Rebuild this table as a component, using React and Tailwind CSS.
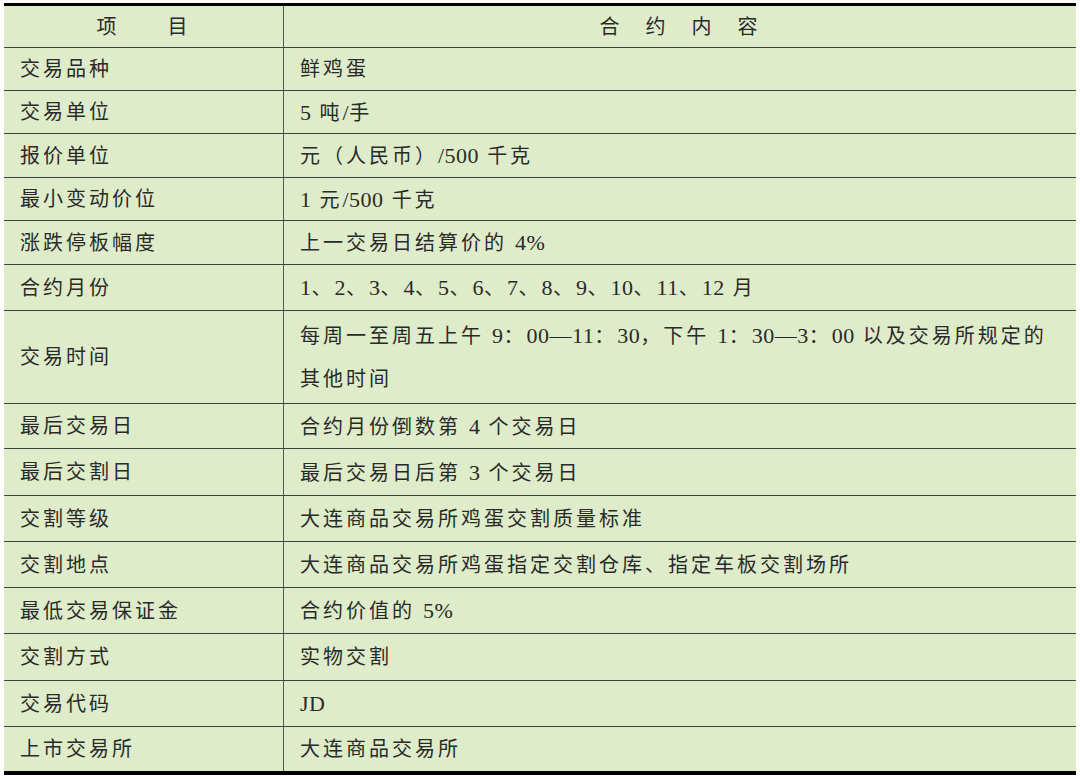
const rows = [
  { h: 'h-[43px]', k: '交易品种', v: '鲜鸡蛋' },
  { h: 'h-[43px]', k: '交易单位', v: '5 吨/手' },
  { h: 'h-[44px]', k: '报价单位', v: '元（人民币）/500 千克' },
  { h: 'h-[43px]', k: '最小变动价位', v: '1 元/500 千克' },
  { h: 'h-[44px]', k: '涨跌停板幅度', v: '上一交易日结算价的 4%' },
  { h: 'h-[46px]', k: '合约月份', v: '1、2、3、4、5、6、7、8、9、10、11、12 月' },
  { h: 'h-[93px]', k: '交易时间', v: ['每周一至周五上午 9：00—11：30，下午 1：30—3：00 以及交易所规定的', '其他时间'] },
  { h: 'h-[45px]', k: '最后交易日', v: '合约月份倒数第 4 个交易日' },
  { h: 'h-[47px]', k: '最后交割日', v: '最后交易日后第 3 个交易日' },
  { h: 'h-[46px]', k: '交割等级', v: '大连商品交易所鸡蛋交割质量标准' },
  { h: 'h-[46px]', k: '交割地点', v: '大连商品交易所鸡蛋指定交割仓库、指定车板交割场所' },
  { h: 'h-[46px]', k: '最低交易保证金', v: '合约价值的 5%' },
  { h: 'h-[47px]', k: '交割方式', v: '实物交割' },
  { h: 'h-[46px]', k: '交易代码', v: 'JD' },
  { h: 'h-[44px]', k: '上市交易所', v: '大连商品交易所' },
];

// latin runs (digits, slashes, dashes) keep normal spacing
function Txt({ s }) {
  const parts = s.split(/([0-9A-Za-z%\/—]+)/);
  return parts.map((p, i) =>
    /^[0-9A-Za-z%\/—]+$/.test(p) ? (
      <span key={i} className="tracking-[0.5px] text-[22px]">{p}</span>
    ) : (
      <span key={i}>{p}</span>
    )
  );
}

export default function App() {
  return (
    <div
      className="w-[1080px] h-[779px] bg-white pt-[3px] px-[4px] text-[#2a2a2a] text-[20px] tracking-[3px]"
      style={{ fontFamily: '"Liberation Serif", "Noto Sans CJK SC", serif' }}
    >
      <div className="w-[1072px] bg-[#deecc9] border-t-[3px] border-b-[4px] border-black">
        {/* Header */}
        <div className="flex h-[42px] border-b border-[#404040]">
          <div className="w-[279px] flex items-center justify-center gap-[48px]">
            <span>项</span>
            <span>目</span>
          </div>
          <div className="flex-1 border-l border-[#555] flex items-center justify-center gap-[23px]">
            <span>合</span>
            <span>约</span>
            <span>内</span>
            <span>容</span>
          </div>
        </div>

        {rows.map((r, i) => (
          <div
            key={r.k}
            className={`flex ${r.h} ${i < rows.length - 1 ? 'border-b border-[#404040]' : ''}`}
          >
            <div className="w-[279px] flex items-center pl-[16px]">{r.k}</div>
            <div className="flex-1 border-l border-[#555] flex flex-col justify-center pl-[16px]">
              {Array.isArray(r.v) ? (
                r.v.map((line) => (
                  <div key={line} className="leading-[43px] whitespace-nowrap">
                    <Txt s={line} />
                  </div>
                ))
              ) : (
                <div className="whitespace-nowrap">
                  <Txt s={r.v} />
                </div>
              )}
            </div>
          </div>
        ))}
      </div>
    </div>
  );
}
